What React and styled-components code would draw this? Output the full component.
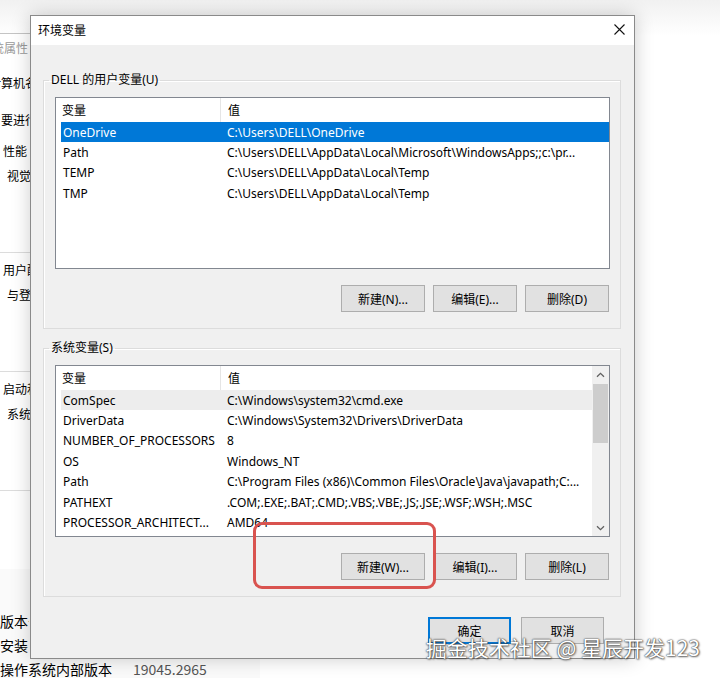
import React from "react"
import styled, { createGlobalStyle } from "styled-components"

const GlobalStyle = createGlobalStyle`
html, body {
  margin: 0;
  padding: 0;
}
body {
  background: #fff;
  font-family: "Noto Sans", "Noto Sans CJK SC", sans-serif;
  font-size: 12px;
  color: #000;
}
`

const Desktop = styled.div`
position: relative;
width: 720px;
height: 678px;
overflow: hidden;
background: linear-gradient(#f1f1f1, #fff 36px);
`

/* ---- window behind: 系统属性 (only its left strip shows) ---- */

const SysProps = styled.div`
position: absolute;
left: -30px;
top: 33px;
width: 59px;
height: 535px;
overflow: hidden;
background: #fff;
border: 1px solid #c4c4c4;
font-family: "Noto Sans CJK SC", sans-serif;
font-size: 12px;
line-height: 16px;
white-space: nowrap;
`

const SysTitle = styled.div`
height: 27px;
display: flex;
align-items: center;
padding-left: 9px;
color: #9a9a9a;
`

const SysTabs = styled.div`
height: 36px;
display: flex;
align-items: flex-end;
padding: 0 0 6px 18px;
box-sizing: border-box;
`

const SysBody = styled.div`
padding: 15px 0 0 30px;
`

const SysGroup = styled.div`
margin: 15px 0 0 -6px;
padding: 0 0 68px 8px;
border-bottom: 1px solid #dcdcdc;
& + & {
  margin-top: 9px;
}
`

const SysDesc = styled.div`
margin: 9px 0 0 4px;
`

const SettingsPane = styled.div`
position: absolute;
left: 0;
top: 569px;
width: 260px;
height: 109px;
background: #fafafa;
padding: 40px 0 0 0;
box-sizing: border-box;
font-family: "Noto Sans CJK SC", sans-serif;
font-size: 14px;
line-height: 24px;
`

const InfoRow = styled.div`
display: grid;
grid-template-columns: 133px 1fr;
white-space: nowrap;
width: ${p => (p.$hidden ? "29px" : "auto")};
overflow: hidden;
`

const InfoValue = styled.span`
color: #555;
`

/* ---- 环境变量 dialog ---- */

const Dialog = styled.div`
position: absolute;
left: 30px;
top: 15px;
width: 603px;
height: 642px;
border: 1px solid #8a8a8a;
background: #f0f0f0;
box-shadow: 0 0 18px rgba(0, 0, 0, 0.2);
display: flex;
flex-direction: column;
`

const TitleBar = styled.div`
height: 29px;
flex-shrink: 0;
box-sizing: border-box;
background: #fff;
display: flex;
align-items: center;
justify-content: space-between;
padding: 0 0 2px 7px;
font-family: "Noto Sans CJK SC", sans-serif;
`

const CloseButton = styled.div`
width: 30px;
height: 27px;
display: flex;
align-items: center;
justify-content: center;
`

const Body = styled.div`
flex: 1;
padding: 27px 13px 0 12px;
`

const Group = styled.fieldset`
margin: 0;
min-width: 0;
border: 1px solid #dcdcdc;
box-shadow: inset 1px 1px 0 #fff;
padding: 9px 10px 16px 11px;
& + & {
  margin-top: 11px;
}
`

const Legend = styled.legend`
margin-left: -6px;
padding: 0 2px;
line-height: 16px;
font-size: 12px;
`

const ListView = styled.div`
height: 170px;
border: 1px solid #828790;
background: #fff;
display: flex;
overflow: hidden;
`

const Table = styled.div`
flex: 1;
padding-left: 5px;
`

const HeaderRow = styled.div`
display: grid;
grid-template-columns: 160px 371px;
height: 24px;
`

const HeaderCell = styled.div`
display: flex;
align-items: center;
padding-left: ${p => (p.$first ? 1 : 7)}px;
border-right: ${p => (p.$first ? "1px solid #e5e5e5" : "none")};
`

const Row = styled.div`
display: grid;
grid-template-columns: 160px 371px;
height: 20.4px;
align-items: center;
white-space: nowrap;
background: ${p => (p.$selected ? "#0078d7" : p.$hover ? "#ededed" : "transparent")};
color: ${p => (p.$selected ? "#fff" : "#000")};
`

const Cell = styled.div`
overflow: hidden;
padding-left: ${p => (p.$first ? 2 : 6)}px;
`

const ScrollBar = styled.div`
width: 17px;
background: #f0f0f0;
display: flex;
flex-direction: column;
align-items: center;
`

const ArrowBox = styled.div`
width: 17px;
height: 17px;
display: flex;
align-items: center;
justify-content: center;
`

const Thumb = styled.div`
width: 15px;
height: 59px;
margin-top: 1px;
background: #cdcdcd;
`

const Track = styled.div`
flex: 1;
`

const ButtonRow = styled.div`
display: flex;
justify-content: flex-end;
gap: 8px;
margin-top: 16px;
padding-right: 1px;
`

const Button = styled.div`
width: ${p => p.$w || 84}px;
height: 27px;
box-sizing: border-box;
display: flex;
align-items: center;
justify-content: center;
background: #e1e1e1;
border: 1px solid ${p => (p.$default ? "#0078d7" : "#adadad")};
box-shadow: ${p => (p.$default ? "inset 0 0 0 1px #0078d7" : "none")};
font-size: 12px;
`

const Footer = styled.div`
display: flex;
justify-content: flex-end;
gap: 10px;
margin-top: 20px;
padding-right: 17px;
`

/* ---- overlays ---- */

const Annotation = styled.div`
position: absolute;
left: 253px;
top: 522px;
width: 183px;
height: 67px;
box-sizing: border-box;
border: 3px solid #d9534f;
border-radius: 9px;
`

const Watermark = styled.div`
position: absolute;
right: 20px;
top: 633px;
font-family: "Noto Sans CJK SC", sans-serif;
font-size: 21px;
line-height: 28px;
color: #fff;
white-space: nowrap;
text-shadow: 0 0 1px #333, 0 0 2px #444, 1px 1px 2px rgba(0, 0, 0, 0.5);
`

const userVars = [
  ["OneDrive", "C:\\Users\\DELL\\OneDrive"],
  ["Path", "C:\\Users\\DELL\\AppData\\Local\\Microsoft\\WindowsApps;;c:\\pr..."],
  ["TEMP", "C:\\Users\\DELL\\AppData\\Local\\Temp"],
  ["TMP", "C:\\Users\\DELL\\AppData\\Local\\Temp"],
]

const sysVars = [
  ["ComSpec", "C:\\Windows\\system32\\cmd.exe"],
  ["DriverData", "C:\\Windows\\System32\\Drivers\\DriverData"],
  ["NUMBER_OF_PROCESSORS", "8"],
  ["OS", "Windows_NT"],
  ["Path", "C:\\Program Files (x86)\\Common Files\\Oracle\\Java\\javapath;C:..."],
  ["PATHEXT", ".COM;.EXE;.BAT;.CMD;.VBS;.VBE;.JS;.JSE;.WSF;.WSH;.MSC"],
  ["PROCESSOR_ARCHITECT...", "AMD64"],
]

const Chevron = ({ down }) => (
  <svg width="9" height="6" viewBox="0 0 9 6">
    <path
      d={down ? "M1 1.2 L4.5 4.6 L8 1.2" : "M1 4.8 L4.5 1.4 L8 4.8"}
      fill="none"
      stroke="#606060"
      strokeWidth="1.3"
    />
  </svg>
)

const VarList = ({ rows, selected, hover, scroll }) => (
  <ListView>
    <Table>
      <HeaderRow>
        <HeaderCell $first>变量</HeaderCell>
        <HeaderCell>值</HeaderCell>
      </HeaderRow>
      {rows.map(([name, value], i) => (
        <Row key={name + i} $selected={i === selected} $hover={i === hover}>
          <Cell $first>{name}</Cell>
          <Cell>{value}</Cell>
        </Row>
      ))}
    </Table>
    {scroll && (
      <ScrollBar>
        <ArrowBox><Chevron /></ArrowBox>
        <Thumb />
        <Track />
        <ArrowBox><Chevron down /></ArrowBox>
      </ScrollBar>
    )}
  </ListView>
)

export default function App() {
  return (
    <Desktop>
      <GlobalStyle />

      {/* only the strip left of the dialog is visible, so only that much text */}
      <SysProps>
        <SysTitle>系统属性</SysTitle>
        <SysTabs>
          <span>计算机名</span>
        </SysTabs>
        <SysBody>
          <div>要进行</div>
          <SysGroup>
            性能
            <SysDesc>视觉</SysDesc>
          </SysGroup>
          <SysGroup>
            用户配
            <SysDesc>与登</SysDesc>
          </SysGroup>
          <SysGroup>
            启动和
            <SysDesc>系统</SysDesc>
          </SysGroup>
        </SysBody>
      </SysProps>

      <SettingsPane>
        <InfoRow $hidden><span>版本号</span></InfoRow>
        <InfoRow $hidden><span>安装日</span></InfoRow>
        <InfoRow><span>操作系统内部版本</span><InfoValue>19045.2965</InfoValue></InfoRow>
      </SettingsPane>

      <Dialog>
        <TitleBar>
          环境变量
          <CloseButton>
            <svg width="11" height="11" viewBox="0 0 11 11">
              <path d="M0.5 0.5 L10.5 10.5 M10.5 0.5 L0.5 10.5" stroke="#111" strokeWidth="1.1" />
            </svg>
          </CloseButton>
        </TitleBar>

        <Body>
          <Group>
            <Legend>DELL 的用户变量(U)</Legend>
            <VarList rows={userVars} selected={0} />
            <ButtonRow>
              <Button>新建(N)...</Button>
              <Button>编辑(E)...</Button>
              <Button>删除(D)</Button>
            </ButtonRow>
          </Group>

          <Group>
            <Legend>系统变量(S)</Legend>
            <VarList rows={sysVars} hover={0} scroll />
            <ButtonRow>
              <Button>新建(W)...</Button>
              <Button>编辑(I)...</Button>
              <Button>删除(L)</Button>
            </ButtonRow>
          </Group>

          <Footer>
            <Button $w={83} $default>确定</Button>
            <Button $w={83}>取消</Button>
          </Footer>
        </Body>
      </Dialog>

      <Annotation />
      <Watermark>掘金技术社区 @ 星辰开发123</Watermark>
    </Desktop>
  )
}
